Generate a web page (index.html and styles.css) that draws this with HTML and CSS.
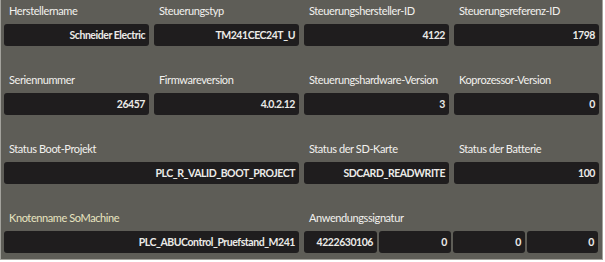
FILE: index.html
```html
<!DOCTYPE html>
<html lang="de">
<head>
    <meta charset="UTF-8">
    <title>Steuerungsinformationen</title>
    <link rel="stylesheet" href="styles.css">
</head>
<body>
    <div class="panel">
        <div class="field">
            <div class="label">Herstellername</div>
            <div class="value">Schneider Electric</div>
        </div>
        <div class="field">
            <div class="label">Steuerungstyp</div>
            <div class="value">TM241CEC24T_U</div>
        </div>
        <div class="field">
            <div class="label">Steuerungshersteller-ID</div>
            <div class="value">4122</div>
        </div>
        <div class="field">
            <div class="label">Steuerungsreferenz-ID</div>
            <div class="value">1798</div>
        </div>

        <div class="field">
            <div class="label">Seriennummer</div>
            <div class="value">26457</div>
        </div>
        <div class="field">
            <div class="label">Firmwareversion</div>
            <div class="value">4.0.2.12</div>
        </div>
        <div class="field">
            <div class="label">Steuerungshardware-Version</div>
            <div class="value">3</div>
        </div>
        <div class="field">
            <div class="label">Koprozessor-Version</div>
            <div class="value">0</div>
        </div>

        <div class="field wide">
            <div class="label">Status Boot-Projekt</div>
            <div class="value">PLC_R_VALID_BOOT_PROJECT</div>
        </div>
        <div class="field">
            <div class="label">Status der SD-Karte</div>
            <div class="value">SDCARD_READWRITE</div>
        </div>
        <div class="field">
            <div class="label">Status der Batterie</div>
            <div class="value">100</div>
        </div>

        <div class="field wide">
            <div class="label node">Knotenname SoMachine</div>
            <div class="value">PLC_ABUControl_Pruefstand_M241</div>
        </div>
        <div class="field wide">
            <div class="label">Anwendungssignatur</div>
            <div class="sig">
                <div class="value">4222630106</div>
                <div class="value">0</div>
                <div class="value">0</div>
                <div class="value">0</div>
            </div>
        </div>
    </div>
</body>
</html>
```

FILE: styles.css
```css
body {
    margin: 0;
    padding: 0;
    background: #ffffff;
    font-family: Lato, "Open Sans", sans-serif;
    font-size: 11px;
}
.panel {
    width: 595px;
    height: 256px;
    padding: 3px 3px 0 3px;
    background: #5e5d57;
    border-left: 1px solid #a3a29c;
    border-right: 1px solid #a3a29c;
    border-bottom: 1px solid #a3a29c;
    display: grid;
    grid-template-columns: repeat(4, 145px);
    column-gap: 5px;
    row-gap: 26px;
    align-content: start;
}
.field {
    display: flex;
    flex-direction: column;
}
.field.wide {
    grid-column: span 2;
}
.label {
    height: 16px;
    line-height: 16px;
    padding-left: 5px;
    margin-bottom: 5px;
    color: #f2f1ee;
    letter-spacing: -0.4px;
    white-space: nowrap;
}
.label.node {
    color: #e8e4c0;
}
.value {
    height: 22px;
    line-height: 22px;
    padding: 0 4px;
    background: #1f1d1e;
    border-radius: 3px;
    color: #ecebe8;
    font-size: 10.5px;
    font-weight: bold;
    letter-spacing: -0.45px;
    text-align: right;
    white-space: nowrap;
    overflow: hidden;
}
.sig {
    display: grid;
    grid-template-columns: 73px 72px 72px 71px;
    column-gap: 2px;
}
```
